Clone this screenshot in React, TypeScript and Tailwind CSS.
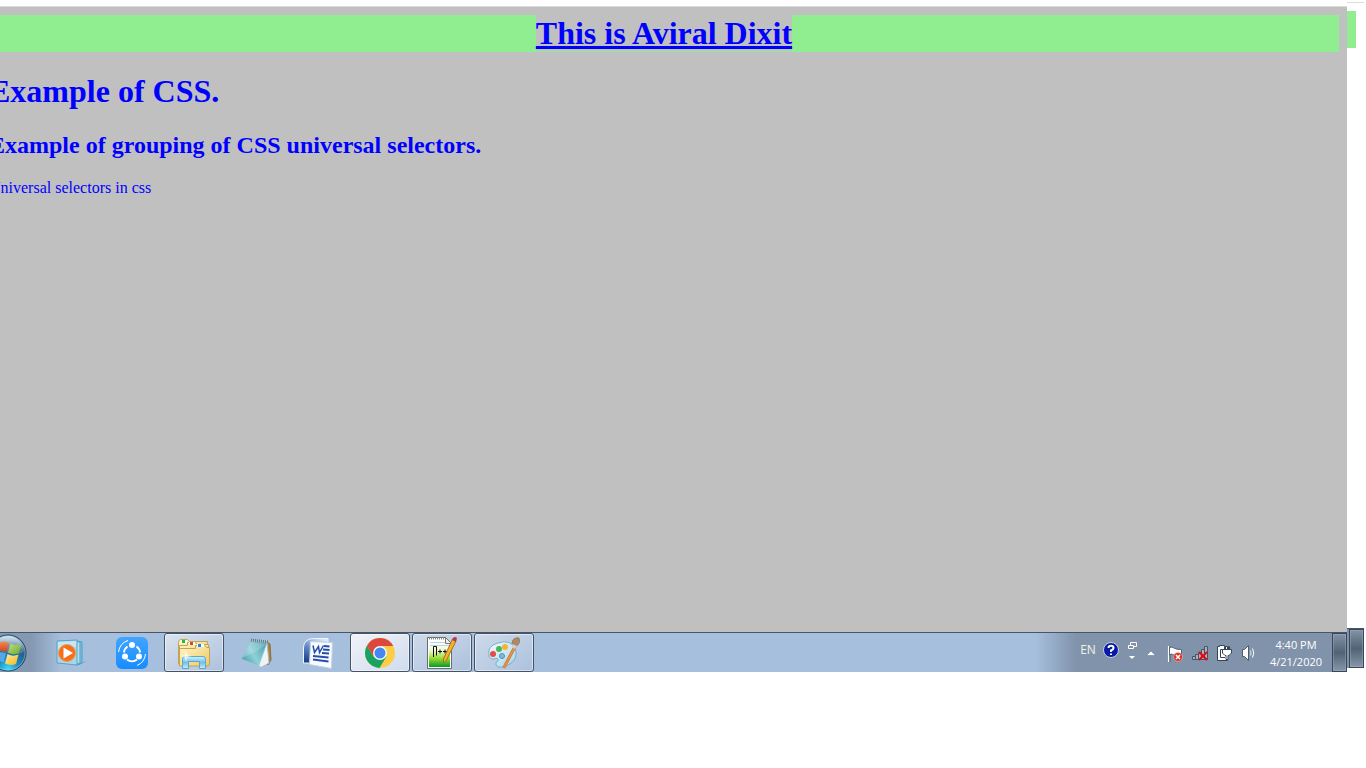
import React from "react";

function StartOrb() {
  return (
    <svg className="block" width="38" height="38" viewBox="0 0 38 38" aria-hidden="true">
      <defs>
        <radialGradient id="orb" cx="0.5" cy="0.95" r="0.9">
          <stop offset="0" stopColor="#3fe0fb" />
          <stop offset="0.35" stopColor="#1a86bd" />
          <stop offset="0.75" stopColor="#2d5378" />
          <stop offset="1" stopColor="#8fb0c8" />
        </radialGradient>
        <linearGradient id="orbShine" x1="0" y1="0" x2="0" y2="1">
          <stop offset="0" stopColor="#dbeaf4" stopOpacity="0.9" />
          <stop offset="1" stopColor="#7fa6c4" stopOpacity="0.3" />
        </linearGradient>
        <linearGradient id="flagRed" x1="0" y1="0" x2="0" y2="1">
          <stop offset="0" stopColor="#f08a4e" />
          <stop offset="1" stopColor="#d8401c" />
        </linearGradient>
        <linearGradient id="flagGreen" x1="0" y1="0" x2="1" y2="1">
          <stop offset="0" stopColor="#c3dd84" />
          <stop offset="1" stopColor="#6aae25" />
        </linearGradient>
        <linearGradient id="flagYellow" x1="0" y1="0" x2="1" y2="1">
          <stop offset="0" stopColor="#fff0a0" />
          <stop offset="1" stopColor="#f5b21d" />
        </linearGradient>
      </defs>
      <circle cx="19" cy="19" r="18" fill="url(#orb)" stroke="#1d4468" strokeWidth="1" />
      <circle cx="19" cy="19" r="17" fill="none" stroke="#9fc9df" strokeOpacity="0.6" />
      <path d="M3 18A16 16 0 0 1 35 18Q27 22 19 19T3 18Z" fill="url(#orbShine)" />
      <path d="M10 9Q14.500 6 20 9L17.500 18Q12 15.500 7.500 18Z" fill="url(#flagRed)" />
      <path d="M21.500 9.500Q26.500 12.500 32.500 9.500L30 19Q24.500 21.500 19 18.500Z" fill="url(#flagGreen)" />
      <path d="M7 19.500Q12 17 17 19.500L14.500 28.500Q10 26 4.500 28.500Z" fill="#54a9e2" />
      <path d="M18.500 20Q24 23 29.500 20.500L27 30Q21.500 32 16 29.500Z" fill="url(#flagYellow)" />
    </svg>
  );
}

function MediaPlayer() {
  return (
    <svg width="32" height="32" viewBox="0 0 32 32" aria-hidden="true">
      <path d="M20 27L32 24L24 28Z" fill="#6a7f96" opacity="0.5" />
      <path d="M22 4L27 5V26L22 28Z" fill="#8cc6e0" stroke="#4a9dc4" />
      <path d="M19 4L25 5V26L20 28Z" fill="#b5def0" stroke="#4a9dc4" />
      <path d="M2 4L22 3V28L2 26Z" fill="#a9d5e9" stroke="#58a5c8" />
      <path d="M3 5L21 4V10Q12 9 3 14Z" fill="#d6eef8" opacity="0.7" />
      <circle cx="12" cy="16" r="8.500" fill="#f37021" stroke="#fa9a4d" />
      <path d="M8.500 10.500L18 16L8.500 21.500Z" fill="#fff" />
    </svg>
  );
}

function ShareIt() {
  return (
    <svg width="32" height="32" viewBox="0 0 32 32" aria-hidden="true">
      <defs>
        <linearGradient id="share" x1="0" y1="0" x2="0" y2="1">
          <stop offset="0" stopColor="#42a5ff" />
          <stop offset="1" stopColor="#168cff" />
        </linearGradient>
      </defs>
      <rect width="32" height="32" rx="6" fill="url(#share)" />
      <g fill="none" stroke="#fff">
        <path d="M11.500 9.500A8 8 0 0 0 8 15.500M20.500 9.500A8 8 0 0 1 24 15.500M11 22.500A8 8 0 0 0 21 22.500" strokeWidth="2" />
        <path d="M2.500 15A14 14 0 0 1 12 3.500M29.500 17A14 14 0 0 1 21 28.500" strokeWidth="1" />
      </g>
      <g fill="#fff">
        <circle cx="16" cy="8" r="3" />
        <circle cx="9" cy="19.500" r="3" />
        <circle cx="23" cy="19.500" r="3" />
      </g>
    </svg>
  );
}

function Explorer() {
  return (
    <svg width="34" height="34" viewBox="0 0 34 34" aria-hidden="true">
      <defs>
        <linearGradient id="folder" x1="0" y1="0" x2="1" y2="1">
          <stop offset="0" stopColor="#fff6c7" />
          <stop offset="1" stopColor="#ecca68" />
        </linearGradient>
        <linearGradient id="stand" x1="0" y1="0" x2="0" y2="1">
          <stop offset="0" stopColor="#d4f0fb" />
          <stop offset="0.5" stopColor="#73c0e4" />
          <stop offset="1" stopColor="#c9ecfa" />
        </linearGradient>
      </defs>
      <g fill="url(#folder)" stroke="#c3a453" strokeWidth="1">
        <path d="M1.500 28V6.500Q1.500 3.500 3.500 3.500H10.500L12.500 5.500H30.500V27Z" />
        <path d="M2.500 28V9.500H10.500V6.500H18.500L20.500 8.500H31.500V27Z" />
        <path d="M2.500 30V12.500H18.500V9.500H27.500L29.500 11.500H32.500V29L30 30Z" />
      </g>
      <rect x="4" y="4" width="6" height="3" fill="#fff" />
      <rect x="12" y="6" width="6" height="3" fill="#fff" />
      <rect x="20" y="8" width="7" height="3" fill="#fff" />
      <rect x="5" y="4" width="3" height="3" fill="#20c02b" />
      <rect x="13" y="6" width="3" height="3" fill="#de4427" />
      <rect x="21" y="8" width="3" height="3" fill="#168ee5" />
      <path d="M5.500 32.500V23Q5.500 20.500 8 20.500H26Q28.500 20.500 28.500 23V32.500H22.500V25.500H11.500V32.500Z" fill="url(#stand)" stroke="#57a9ce" />
      <path d="M9 14L10 19L15 20L10 21L9 26L8 21L3 20L8 19Z" fill="#fff" opacity="0.8" />
    </svg>
  );
}

function Notepad() {
  return (
    <svg width="34" height="32" viewBox="0 0 34 32" aria-hidden="true">
      <defs>
        <linearGradient id="pad" x1="0" y1="0.8" x2="1" y2="0.2">
          <stop offset="0" stopColor="#4499ad" />
          <stop offset="0.45" stopColor="#8fd0d8" />
          <stop offset="1" stopColor="#4fa3b4" />
        </linearGradient>
      </defs>
      <path d="M28 5L31 7L32 23L29 28Z" fill="#a8823d" stroke="#8a7045" />
      <path d="M28 5L30 26L22 30.500L19 28Z" fill="#eef4f6" stroke="#a9bcc4" />
      <path d="M12 4L28 6L19.500 29L2 22Z" fill="url(#pad)" stroke="#9ccbd4" />
      <path d="M12 5L3 21L18 14L27 7Z" fill="#fff" opacity="0.2" />
      <path d="M12 3L29 5" stroke="#6a777d" strokeWidth="3" strokeDasharray="1 1" />
    </svg>
  );
}

function Word() {
  return (
    <svg width="32" height="32" viewBox="0 0 32 32" aria-hidden="true">
      <defs>
        <linearGradient id="word" x1="0.7" y1="0" x2="0.2" y2="1">
          <stop offset="0" stopColor="#d9e6f7" />
          <stop offset="0.5" stopColor="#5f86c4" />
          <stop offset="1" stopColor="#193e86" />
        </linearGradient>
      </defs>
      <path d="M1.500 26V11Q1.500 1.500 12 1.500H26V26Z" fill="url(#word)" stroke="#eef5ff" />
      <path d="M8.500 4.500L30.500 5.500L29.500 31.500L7.500 27.500Z" fill="#f8fbff" stroke="#c3d0e2" />
      <path d="M11 8.500L12.500 15.500L16.500 9.500L17.500 15.500L21.500 8.500" fill="none" stroke="#254eaa" strokeWidth="1.500" />
      <path d="M22 9L27.500 9.500M21 12.500L27.500 13M20 16L27 16.500M11 19L26.500 20.500M11 22.500L26.500 24.500" stroke="#254eaa" strokeWidth="2" />
    </svg>
  );
}

function Chrome() {
  return (
    <svg width="32" height="32" viewBox="0 0 32 32" aria-hidden="true">
      <circle cx="16" cy="16" r="15" fill="#fbce45" />
      <path d="M3 8.500A15 15 0 0 0 15.500 31L22.500 19.500L16 16L9.500 19.500Z" fill="#1ba262" />
      <path d="M3 8.500A15 15 0 0 1 29.200 9H16L9.500 19.500Z" fill="#dc483c" />
      <circle cx="16" cy="16" r="7" fill="#f6f8f9" />
      <circle cx="16" cy="16" r="5.500" fill="#4587f3" />
    </svg>
  );
}

function NotepadPlus() {
  return (
    <svg width="32" height="34" viewBox="0 0 32 34" aria-hidden="true">
      <defs>
        <linearGradient id="npp" x1="0" y1="0" x2="0" y2="1">
          <stop offset="0" stopColor="#fff" />
          <stop offset="0.35" stopColor="#effad8" />
          <stop offset="0.65" stopColor="#a0dd35" />
          <stop offset="1" stopColor="#079b23" />
        </linearGradient>
      </defs>
      <path d="M1.500 1.500H19.500L25.500 7.500V32.500H1.500Z" fill="#fff" stroke="#67706b" />
      <rect x="3" y="5" width="21" height="26" fill="url(#npp)" />
      <path d="M3 2.500H19" stroke="#888" strokeWidth="2" strokeDasharray="1 1" />
      <path d="M4 6.500H20M4 9.500H24" stroke="#b7d3e0" />
      <path d="M19.500 1.500V7.500H25.500Z" fill="#eee" stroke="#777" />
      <path d="M7.500 21V10.500H10.500V19.500M12 15.500H16M14 13.500V17.500M17 15.500H21M19 13.500V17.500" stroke="#111" fill="none" />
      <path d="M26.500 3L30 5L20.500 24L17.500 27V23Z" fill="#f5b32e" stroke="#a8701e" />
      <path d="M27 2Q29 0 31 2L30 6L26 4Z" fill="#b63b4a" />
    </svg>
  );
}

function Paint() {
  return (
    <svg width="34" height="34" viewBox="0 0 34 34" aria-hidden="true">
      <defs>
        <linearGradient id="palette" x1="0" y1="0" x2="1" y2="1">
          <stop offset="0" stopColor="#f4fcff" />
          <stop offset="1" stopColor="#a3d3e8" />
        </linearGradient>
      </defs>
      <path d="M2 19Q0 10 11 7Q23 3 28 12Q32 22 23 28Q12 34 9 29Q8 26 11 25Q12 21 7 23Q2 23 2 19Z" fill="url(#palette)" stroke="#71afce" />
      <circle cx="6" cy="18" r="3" fill="#e54c45" />
      <circle cx="12" cy="13" r="3" fill="#4cb45c" />
      <circle cx="18" cy="11" r="3" fill="#f6b332" />
      <circle cx="15" cy="20" r="2.500" fill="#80b9d4" stroke="#4c91b5" />
      <path d="M27 10L29 11L18 32L16 31Z" fill="#e99343" stroke="#d27e36" />
      <path d="M25 7Q26 1 32 2Q34 8 28 11Z" fill="#b08a64" stroke="#9c7a5c" />
      <path d="M25.500 8L30 10L28 13L25 11.500Z" fill="#c6d2da" />
    </svg>
  );
}

const tasks = [
  { name: "Windows Explorer", icon: <Explorer />, face: "from-[#dbe3ee] to-[#adc1dd]" },
  { name: "Notepad", icon: <Notepad />, face: "" },
  { name: "Microsoft Word", icon: <Word />, face: "" },
  { name: "Google Chrome", icon: <Chrome />, face: "from-[#f0f3f9] to-[#cfdbed]" },
  { name: "Notepad++", icon: <NotepadPlus />, face: "from-[#cedaea] to-[#adc1dd]" },
  { name: "Paint", icon: <Paint />, face: "from-[#cedaea] to-[#adc1dd]" },
];

const desktopFace =
  "border border-[#39475a] bg-linear-to-b from-[#8493a6] via-[#526375] to-[#8796aa] shadow-[inset_0_0_0_1px_#a3b1c366]";

function Tray() {
  return (
    <div className="flex h-full items-center bg-[linear-gradient(90deg,#a6bfdc_0,#8193ab_40px)] pl-10 font-['Open_Sans','Noto_Sans',sans-serif] text-xs text-white">
      <button className="-mt-1.5 w-6 text-center text-[#f3f1e6]">EN</button>
      <button aria-label="Help" className="-mt-1.5 ml-0.5">
        <svg width="18" height="18" viewBox="0 0 18 18">
          <circle cx="9" cy="9" r="7.500" fill="#0719a5" stroke="#c6d0dc" />
          <path d="M6.500 7C6.500 4 11.500 4 11.500 7Q11.500 8.500 9 9.500V11M9 12.500V14" fill="none" stroke="#fff" strokeWidth="2" />
        </svg>
      </button>
      <button aria-label="Language options" className="-mt-1.5 ml-1.5">
        <svg width="12" height="20" viewBox="0 0 12 20" fill="none" stroke="#fff">
          <path d="M4.500 5V2.500H10.500V6.500H8M2.500 5.500H7.500V8.500H2.500Z" />
          <path d="M3 16H9L6 19Z" fill="#fff" stroke="none" />
        </svg>
      </button>
      <button aria-label="Show hidden icons" className="ml-2">
        <svg width="10" height="8" viewBox="0 0 10 8">
          <path d="M0.500 6.500L5 2L9.500 6.500Z" fill="#fff" stroke="#5f7187" strokeWidth="0.500" />
        </svg>
      </button>
      <button aria-label="Action Center" className="ml-2.5 mt-0.5">
        <svg width="17" height="18" viewBox="0 0 17 18">
          <path d="M3 1V17" stroke="#4c5b70" strokeWidth="3" />
          <path d="M2.500 1V17" stroke="#fff" strokeWidth="1.500" />
          <path d="M3.500 2.500Q6 1.500 8 3T15.500 4.500V11Q11 12 8 10T3.500 10Z" fill="#fff" stroke="#56657a" />
          <circle cx="12" cy="12" r="4.500" fill="#d6372b" stroke="#f5c5c0" strokeWidth="0.500" />
          <path d="M10 10L14 14M14 10L10 14" stroke="#fff" strokeWidth="1.500" />
        </svg>
      </button>
      <button aria-label="Network" className="ml-2 mt-0.5">
        <svg width="17" height="17" viewBox="0 0 17 17">
          <g fill="#a8b1bc" stroke="#45556a">
            <path d="M1.500 11.500H4.500V14.500H1.500ZM4.500 9.500H7.500V14.500H4.500ZM7.500 7.500H10.500V14.500H7.500ZM10.500 4.500H13.500V14.500H10.500ZM13.500 1.500H16.500V14.500H13.500Z" />
          </g>
          <path d="M8 7L16 15M16 7L8 15" stroke="#e50812" strokeWidth="2" />
        </svg>
      </button>
      <button aria-label="Power" className="ml-2">
        <svg width="16" height="18" viewBox="0 0 16 18">
          <path d="M3.500 2.500V1.500H8.500V2.500H11.500V16.500H1.500V2.500Z" fill="#fff" stroke="#34465c" />
          <path d="M9 5.500H4.500V13.500H9" fill="none" stroke="#34465c" />
          <path d="M8.500 5.500V2.500H9.500V5.500M13.500 5.500V2.500H12.500V5.500M6.500 5.500H15.500V9L13 11.500H12V15.500H10V11.500H9L6.500 9Z" fill="#fff" stroke="#34465c" />
        </svg>
      </button>
      <button aria-label="Volume" className="ml-2">
        <svg width="16" height="18" viewBox="0 0 16 18">
          <path d="M2.500 5.500H4.500L8.500 1.500V16.500L4.500 12.500H2.500Z" fill="#fff" stroke="#4b5b71" />
          <path d="M10.500 6.500Q11.500 9 10.500 11.500" fill="none" stroke="#dfe5ec" />
          <path d="M12.500 4.500Q15 9 12.500 13.500" fill="none" stroke="#fff" />
        </svg>
      </button>
      <time className="ml-2 w-16 text-center text-[11px] leading-[17px]">
        4:40 PM
        <br />
        4/21/2020
      </time>
      <button aria-label="Show desktop" className={`ml-1 h-full w-[15px] ${desktopFace}`} />
    </div>
  );
}

export default function App() {
  return (
    <div className="flex overflow-hidden bg-white">
      <main className="-ml-[19px] mt-[6px] min-w-0 flex-1 border-t border-[#dcdcdc] bg-[silver]">
        <section className="min-h-[625px] p-2 font-['Liberation_Serif',serif] text-[#00f]">
          <h1 className="bg-[#90ee90] text-center text-[32px] leading-[37px] font-bold">
            <span className="bg-[silver] underline">This is Aviral Dixit</span>
          </h1>
          <h1 className="mt-[21px] text-[32px] leading-[37px] font-bold">Example of CSS.</h1>
          <h2 className="mt-[21px] text-2xl leading-7 font-bold">Example of grouping of CSS universal selectors.</h2>
          <p className="mt-5 text-base leading-[18px]">Universal selectors in css</p>
        </section>
        <nav aria-label="Taskbar" className="flex h-10 items-center border-t border-[#465569] bg-[#a6bfdc]">
          <div className="flex h-full flex-1 items-center bg-[linear-gradient(90deg,#8498b1_0,#8498b1_50px,#a6bfdc_80px)] pl-2">
            <button aria-label="Start">
              <StartOrb />
            </button>
            <button aria-label="Windows Media Player" className="ml-7 flex w-8 justify-center">
              <MediaPlayer />
            </button>
            <button aria-label="SHAREit" className="mr-4 ml-[29px]">
              <ShareIt />
            </button>
            <div className="flex h-full gap-[2px]">
              {tasks.map((task) => (
                <button
                  key={task.name}
                  aria-label={task.name}
                  className={
                    task.face
                      ? `flex h-full w-[60px] items-center justify-center rounded-[3px] border border-[#435266] bg-linear-to-br shadow-[inset_0_0_0_1px_#ffffff80] ${task.face}`
                      : "flex h-full w-[60px] items-center justify-center"
                  }
                >
                  {task.icon}
                </button>
              ))}
            </div>
          </div>
          <Tray />
        </nav>
      </main>
      <aside aria-hidden="true" className="mt-[2px] flex h-[666px] w-[19px] flex-col">
        <div className="mr-[2px] h-px bg-[#dcdcdc]" />
        <div className="mt-2 h-[37px] w-[9px] bg-[#90ee90]" />
        <div className="mt-auto mr-[2px] flex h-10 border-t border-[#465569] bg-[#8193ab] pl-[2px]">
          <div className={`flex-1 ${desktopFace}`} />
        </div>
      </aside>
    </div>
  );
}
